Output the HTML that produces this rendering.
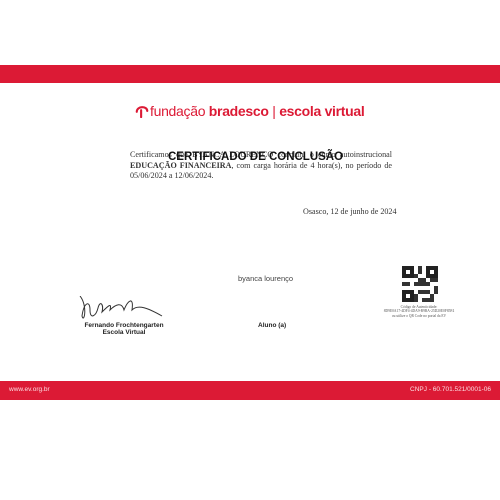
<!DOCTYPE html>
<html><head><meta charset="utf-8"><style>
body{margin:0;width:500px;height:500px;background:#fff;position:relative;overflow:hidden;font-family:"Liberation Sans",sans-serif}
.a{position:absolute;white-space:nowrap}
.bar{position:absolute;left:0;width:500px;background:#dc1a35}
.s{font-family:"Liberation Serif",serif;font-size:8.1px;color:#333;line-height:10.5px}
</style></head><body>
<div class="bar" style="top:65px;height:18px"></div>
<div class="a" style="left:135px;top:103px;font-size:14px;color:#dc1a35;letter-spacing:-0.3px">
<svg width="14" height="14" style="position:absolute;left:0;top:1px" viewBox="0 0 16 16"><path d="M2 9 C2 2 14 2 14 8 M7 7 v8" stroke="#dc1a35" stroke-width="2.4" fill="none" stroke-linecap="round"/></svg>
<span style="margin-left:15px">fundação <b>bradesco</b> <span style="font-weight:300">|</span> <b style="font-weight:600">escola virtual</b></span></div>
<div class="a s" style="left:130px;top:150px;width:262px;white-space:normal;text-align:justify">Certificamos que BYANCA LOURENÇO concluiu o curso autoinstrucional <b>EDUCAÇÃO FINANCEIRA</b>, com carga horária de 4 hora(s), no período de 05/06/2024 a 12/06/2024.</div>
<div class="a" style="left:168px;top:151px;font-size:11.5px;font-weight:bold;color:#111">CERTIFICADO DE CONCLUSÃO</div>
<div class="a s" style="left:303px;top:207px">Osasco, 12 de junho de 2024</div>
<div class="a" style="left:238px;top:274px;font-size:7.5px;color:#444">byanca lourenço</div>
<svg class="a" style="left:78px;top:296px" width="88" height="30" viewBox="0 0 88 30"><path d="M2 0 C10 10 6 28 4 20 C6 6 12 4 12 14 C12 24 18 20 20 12 C22 4 26 8 24 16 C30 10 34 6 32 14 C38 8 44 6 46 14 C50 4 56 0 54 14 C60 8 70 12 84 20" stroke="#333" stroke-width="1" fill="none"/></svg>
<div class="a" style="left:81px;top:322px;font-size:6.5px;font-weight:bold;color:#222;text-align:center;width:86px;line-height:7px">Fernando Frochtengarten<br>Escola Virtual</div>
<div class="a" style="left:258px;top:322px;font-size:6.5px;font-weight:bold;color:#222">Aluno (a)</div>
<svg class="a" style="left:402px;top:266px" width="36" height="36" viewBox="0 0 9 9" shape-rendering="crispEdges">
<rect width="9" height="9" fill="#fff"/>
<path d="M0 0h3v3h-3zM6 0h3v3h-3zM0 6h3v3h-3z" fill="#222"/>
<path d="M1 1h1v1h-1zM7 1h1v1h-1zM1 7h1v1h-1z" fill="#fff"/>
<path d="M4 0h1v2h-1zM3 4h2v1h-2zM5 3h1v2h-1zM0 4h2v1h-2zM6 4h1v1h-1zM8 5h1v2h-1zM4 6h2v1h-2zM5 8h3v1h-3zM6 6h1v1h-1zM3 7h1v2h-1zM7 3h2v1h-2zM3 2h1v1h-1zM4 3h1v1h-1zM7 7h1v1h-1z" fill="#333"/>
</svg>
<div class="a" style="left:376px;top:305px;width:86px;text-align:center;font-family:'Liberation Serif',serif;font-size:3.6px;color:#555;line-height:4.3px">Código de Autenticidade:<br>8D9E0A17-4DF4-4DA9-B9BA-25D20E0F85F4<br>ou utilize o QR Code no portal da EV</div>
<div class="bar" style="top:381px;height:19px"></div>
<div class="a" style="left:9px;top:386px;font-size:6.5px;color:#fbdde1">www.ev.org.br</div>
<div class="a" style="right:9px;top:386px;font-size:6.5px;color:#fbdde1">CNPJ - 60.701.521/0001-06</div>
</body></html>
